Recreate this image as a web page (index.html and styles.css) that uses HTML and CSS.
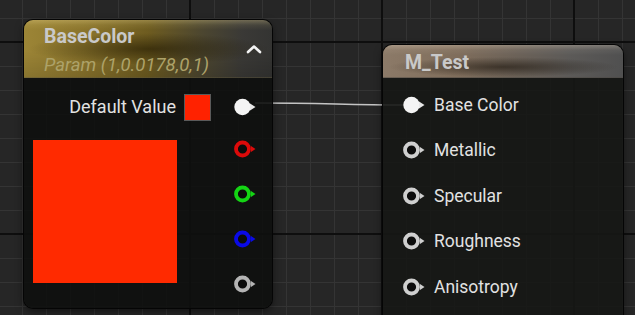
FILE: index.html
```html
<!DOCTYPE html>
<html>
<head>
<meta charset="utf-8">
<link rel="stylesheet" href="styles.css">
</head>
<body>
<div class="canvas">
  <svg class="wire" width="635" height="315" viewBox="0 0 635 315">
    <path d="M255 103 C 330 103, 340 105, 406 105" fill="none" stroke="#c4c4c4" stroke-width="1.6"/>
  </svg>

  <div class="node node-param">
    <div class="header header-gold">
      <div class="titles">
        <div class="title">BaseColor</div>
        <div class="subtitle">Param (1,0.0178,0,1)</div>
      </div>
      <svg class="chevron" width="16" height="10" viewBox="0 0 16 10">
        <polyline points="2,8 8,2.5 14,8" fill="none" stroke="#f2f2f2" stroke-width="2.6" stroke-linecap="round" stroke-linejoin="round"/>
      </svg>
    </div>
    <div class="body">
      <div class="row-default">
        <span class="label label-default">Default Value</span>
        <span class="swatch-small"></span>
        <svg class="pin pin-gap" width="22" height="18" viewBox="0 0 22 18">
          <circle cx="8.5" cy="9" r="8.2" fill="#f4f4f4"/>
          <path d="M16 5.6 L21.5 9 L16 12.4 Z" fill="#e8e8e8"/>
        </svg>
      </div>
      <div class="row-preview">
        <div class="swatch-big"></div>
        <div class="pin-stack">
          <svg class="pin pin-red" width="22" height="18" viewBox="0 0 22 18">
            <circle cx="8.5" cy="9" r="6.5" fill="#0c0c0c" stroke="currentColor" stroke-width="3.8"/>
            <path d="M17 6 L21.5 9 L17 12 Z" fill="currentColor"/>
          </svg>
          <svg class="pin pin-green" width="22" height="18" viewBox="0 0 22 18">
            <circle cx="8.5" cy="9" r="6.5" fill="#0c0c0c" stroke="currentColor" stroke-width="3.8"/>
            <path d="M17 6 L21.5 9 L17 12 Z" fill="currentColor"/>
          </svg>
          <svg class="pin pin-blue" width="22" height="18" viewBox="0 0 22 18">
            <circle cx="8.5" cy="9" r="6.5" fill="#0c0c0c" stroke="currentColor" stroke-width="3.8"/>
            <path d="M17 6 L21.5 9 L17 12 Z" fill="currentColor"/>
          </svg>
          <svg class="pin pin-gray" width="22" height="18" viewBox="0 0 22 18">
            <circle cx="8.5" cy="9" r="6.5" fill="#0c0c0c" stroke="currentColor" stroke-width="3.8"/>
            <path d="M17 6 L21.5 9 L17 12 Z" fill="currentColor"/>
          </svg>
        </div>
      </div>
    </div>
  </div>

  <div class="node node-material">
    <div class="header header-brown">
      <div class="title">M_Test</div>
    </div>
    <div class="body-inputs">
      <div class="input-row">
        <svg class="pin" width="22" height="18" viewBox="0 0 22 18">
          <circle cx="8.5" cy="9" r="8.2" fill="#f4f4f4"/>
          <path d="M16 5.6 L21.5 9 L16 12.4 Z" fill="#e8e8e8"/>
        </svg>
        <span class="label">Base Color</span>
      </div>
      <div class="input-row">
        <svg class="pin pin-white" width="22" height="18" viewBox="0 0 22 18">
          <circle cx="8.5" cy="9" r="6.5" fill="#0c0c0c" stroke="currentColor" stroke-width="3.8"/>
          <path d="M17 6 L21.5 9 L17 12 Z" fill="currentColor"/>
        </svg>
        <span class="label">Metallic</span>
      </div>
      <div class="input-row">
        <svg class="pin pin-white" width="22" height="18" viewBox="0 0 22 18">
          <circle cx="8.5" cy="9" r="6.5" fill="#0c0c0c" stroke="currentColor" stroke-width="3.8"/>
          <path d="M17 6 L21.5 9 L17 12 Z" fill="currentColor"/>
        </svg>
        <span class="label">Specular</span>
      </div>
      <div class="input-row">
        <svg class="pin pin-white" width="22" height="18" viewBox="0 0 22 18">
          <circle cx="8.5" cy="9" r="6.5" fill="#0c0c0c" stroke="currentColor" stroke-width="3.8"/>
          <path d="M17 6 L21.5 9 L17 12 Z" fill="currentColor"/>
        </svg>
        <span class="label">Roughness</span>
      </div>
      <div class="input-row">
        <svg class="pin pin-white" width="22" height="18" viewBox="0 0 22 18">
          <circle cx="8.5" cy="9" r="6.5" fill="#0c0c0c" stroke="currentColor" stroke-width="3.8"/>
          <path d="M17 6 L21.5 9 L17 12 Z" fill="currentColor"/>
        </svg>
        <span class="label">Anisotropy</span>
      </div>
    </div>
  </div>
</div>
</body>
</html>
```
FILE: styles.css
```css
* { box-sizing: border-box; }

html, body {
  margin: 0;
  padding: 0;
  width: 635px;
  height: 315px;
  overflow: hidden;
  background: #262626;
  font-family: Roboto, "Liberation Sans", sans-serif;
}

.canvas {
  position: relative;
  width: 635px;
  height: 315px;
  overflow: hidden;
  background-color: #262626;
  background-image:
    linear-gradient(to right, #0e0e0e 2px, transparent 2px),
    linear-gradient(to bottom, #0e0e0e 2px, transparent 2px),
    linear-gradient(to right, #343434 1px, transparent 1px),
    linear-gradient(to bottom, #343434 1px, transparent 1px);
  background-size: 192px 192px, 192px 192px, 24px 24px, 24px 24px;
  background-position: 189px 0, 0 41px, 22px 0, 0 18px;
}

.wire {
  position: absolute;
  left: 0;
  top: 0;
}

.node {
  position: absolute;
  border-radius: 9px;
  overflow: hidden;
  box-shadow: 0 0 0 1px #050505, 0 3px 8px rgba(0, 0, 0, 0.55);
  display: flex;
  flex-direction: column;
}

.node-param {
  left: 24px;
  top: 20px;
  width: 248px;
  height: 288px;
  background: rgba(14, 16, 14, 0.9);
}

.node-material {
  left: 383px;
  top: 45px;
  width: 240px;
  height: 300px;
  background: rgba(22, 23, 21, 0.9);
}

.header {
  flex: none;
  border-bottom: 1px solid rgba(0, 0, 0, 0.35);
}

.header-gold {
  height: 58px;
  padding: 5px 10px 0 20px;
  display: flex;
  align-items: flex-start;
  justify-content: space-between;
  background:
    linear-gradient(to bottom, rgba(255, 235, 160, 0.28) 0, rgba(255, 235, 160, 0.08) 5px, rgba(255, 235, 160, 0) 10px),
    radial-gradient(ellipse 120px 16px at 125px 29px, rgba(30, 22, 0, 0.6), rgba(30, 22, 0, 0) 100%),
    linear-gradient(to bottom, rgba(0, 0, 0, 0) 55%, rgba(0, 0, 0, 0.12) 100%),
    linear-gradient(to right, #9c8536 0%, #8a742c 25%, #6e5c20 50%, #4c4630 72%, #3a3936 88%, #343432 100%);
}

.header-brown {
  height: 33px;
  padding: 2px 0 0 22px;
  background:
    linear-gradient(to bottom, rgba(255, 240, 220, 0.25) 0, rgba(255, 240, 220, 0.06) 5px, rgba(255, 240, 220, 0) 10px),
    radial-gradient(ellipse 115px 10px at 120px 22px, rgba(25, 18, 10, 0.6), rgba(25, 18, 10, 0) 100%),
    linear-gradient(to right, #8c7a68 0%, #806e5c 30%, #6c6258 55%, #5c5a58 78%, #505050 100%);
}

.titles {
  display: flex;
  flex-direction: column;
}

.title {
  font-size: 19.5px;
  font-weight: 700;
  line-height: 24px;
  color: #c9c9c9;
}

.header-brown .title {
  line-height: 31px;
}

.subtitle {
  margin-top: 4px;
  font-size: 18.5px;
  font-style: italic;
  line-height: 24px;
  color: #ada269;
}

.chevron {
  align-self: center;
  margin-top: -4px;
}

.body {
  padding: 16px 16px 0 9px;
  display: flex;
  flex-direction: column;
}

.row-default {
  display: flex;
  align-items: center;
  justify-content: flex-end;
  height: 26px;
}

.label {
  font-size: 17.5px;
  color: #e2e2e2;
  line-height: 20px;
}

.label-default {
  font-size: 18px;
}

.swatch-small {
  width: 27px;
  height: 27px;
  margin-left: 8px;
  background: #ff2200;
  border: 1px solid #5a5a5a;
}

.pin {
  display: block;
  flex: none;
}

.pin-gap {
  margin-left: 23px;
}

.row-preview {
  margin-top: 20px;
  display: flex;
  justify-content: space-between;
  align-items: flex-start;
}

.swatch-big {
  width: 144px;
  height: 143px;
  background: #ff2a00;
}

.pin-stack {
  display: flex;
  flex-direction: column;
  gap: 27px;
  padding-top: 0;
}

.pin-red { color: #dc0a0a; }
.pin-green { color: #14d414; }
.pin-blue { color: #0a0ae6; }
.pin-gray { color: #b4b4b4; }
.pin-white { color: #cfcfcf; }

.body-inputs {
  padding-top: 4px;
  display: flex;
  flex-direction: column;
}

.input-row {
  height: 45.5px;
  display: flex;
  align-items: center;
  gap: 9px;
  padding-left: 20px;
}
```
